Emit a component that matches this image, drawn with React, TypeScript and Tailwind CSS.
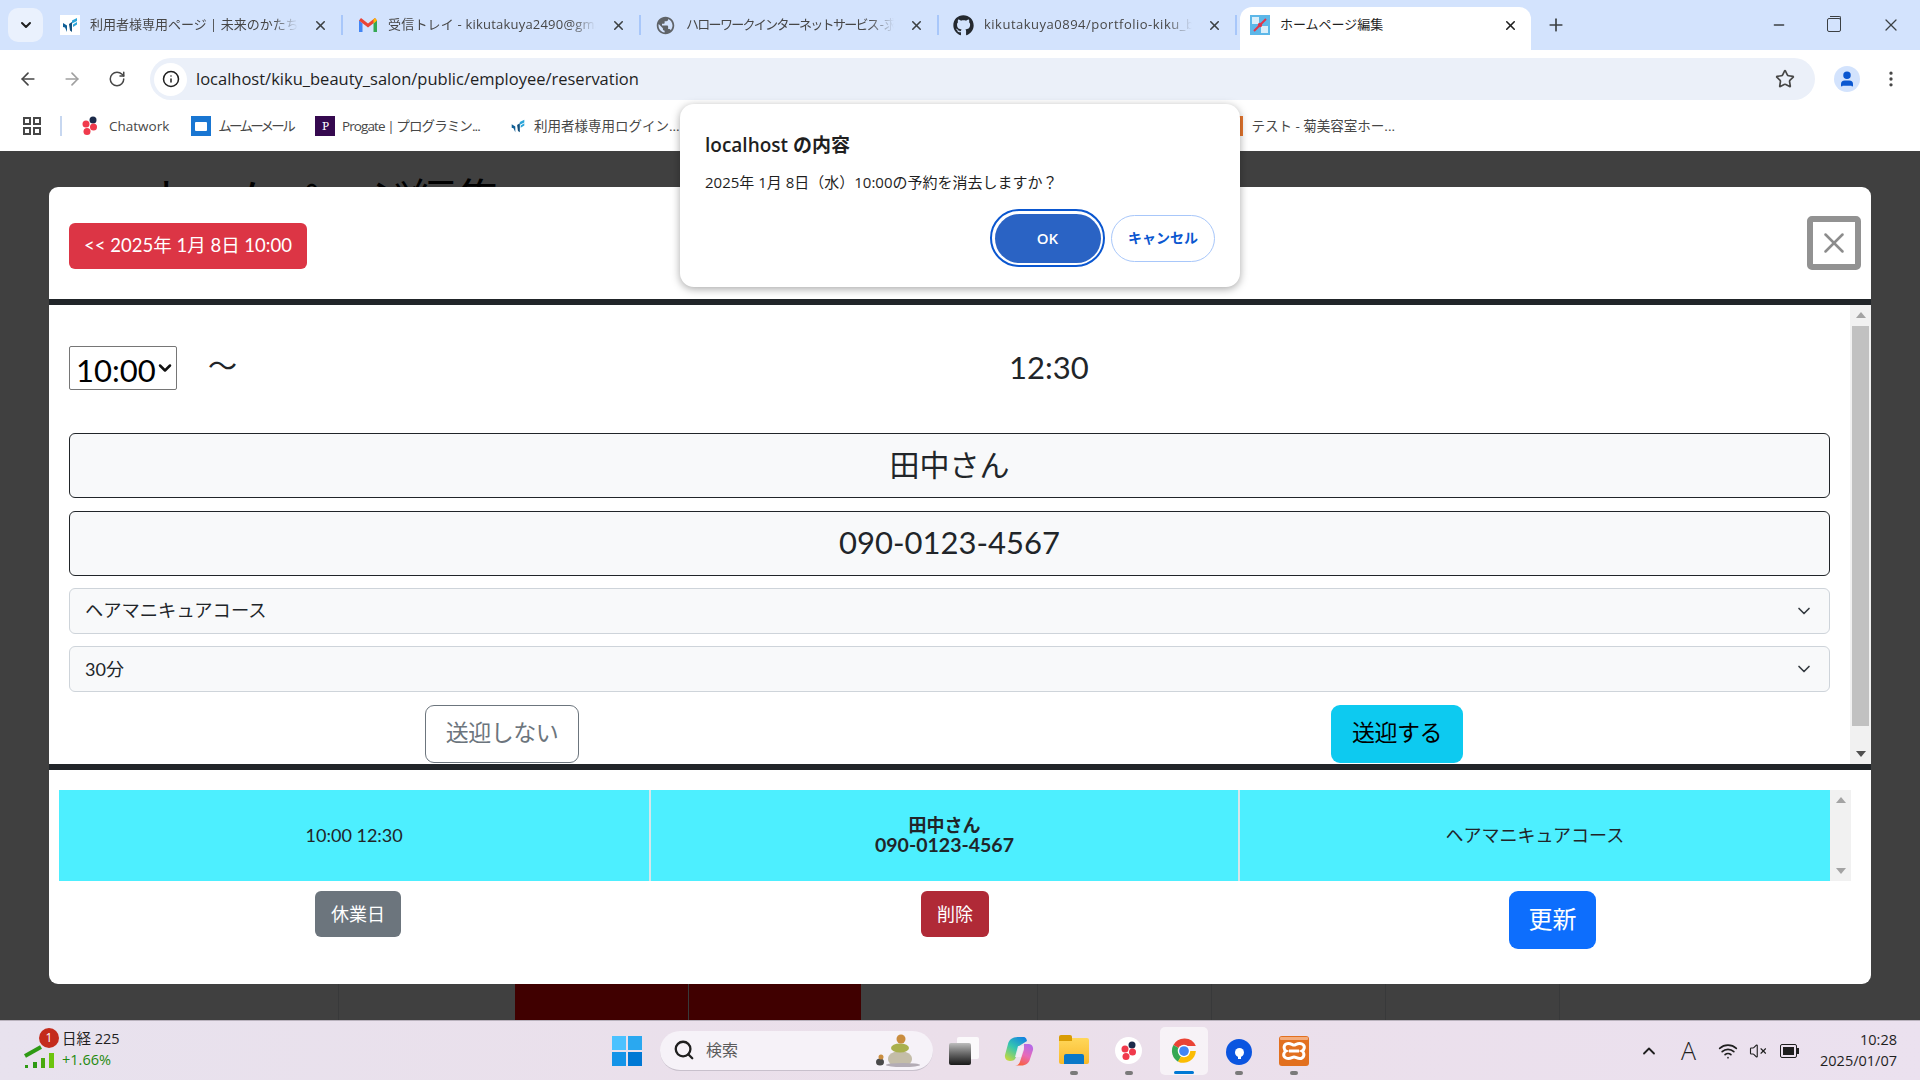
import React, { ReactNode } from 'react';
import { ArrowLeft, ArrowRight, ChevronDown, ChevronUp, Info, Minus, MoreVertical, Plus, RotateCw, Search, Star, User, VolumeX, Wifi, X } from 'lucide-react';
import { FaGithub } from 'react-icons/fa';
import { MdPublic } from 'react-icons/md';

const uiFont = "font-['Open_Sans','Noto_Sans_CJK_JP',sans-serif]";
const pageFont = "font-['Lato','Noto_Sans_CJK_JP',sans-serif]";

const MiraiIcon = ({ size = 20 }: { size?: number }) => (
  <svg width={size} height={size} viewBox="0 0 20 20">
    <rect width="20" height="20" fill="#fff" />
    <path d="M3 8l4 2.500V17L5 12.500 3 12z" fill="#0f5f96" />
    <path d="M9 9l3-2v10l-2-1.500z" fill="#124f7c" />
    <path d="M12 5.500L17 3v3l-5 2.500z" fill="#2aa4d8" />
    <path d="M13 9.500l4-2.500v2.500l-4 2.500z" fill="#2aa4d8" />
  </svg>
);

const GmailIcon = () => (
  <svg width="20" height="20" viewBox="0 0 20 20">
    <path d="M1 5v12h3.500V8.500z" fill="#4285f4" />
    <path d="M19 5v12h-3.500V8.500z" fill="#34a853" />
    <path d="M1 5.500L3 3l7 5.500L17 3l2 2.500-9 7z" fill="#ea4335" />
    <path d="M15.500 4.200L17 3l2 2.500-3.500 3z" fill="#fbbc04" />
  </svg>
);

const SiteIcon = () => (
  <svg width="20" height="20" viewBox="0 0 20 20">
    <rect width="20" height="20" fill="#5db7e8" />
    <rect x="2" y="2" width="7" height="7" fill="#d9eefa" />
    <rect x="11" y="11" width="7" height="7" fill="#d9eefa" />
    <path d="M4 16L16 4" stroke="#e0364a" strokeWidth="2" />
    <circle cx="10" cy="10" r="2.200" fill="#e0364a" />
  </svg>
);

const ChatworkIcon = ({ size = 20 }: { size?: number }) => (
  <svg width={size} height={size} viewBox="0 0 20 20">
    <circle cx="13" cy="4" r="3.500" fill="#1b2a4a" />
    <circle cx="6" cy="8" r="3.500" fill="#f03a4c" />
    <circle cx="13.500" cy="11" r="3.500" fill="#f03a4c" />
    <circle cx="7" cy="15.500" r="3.500" fill="#f03a4c" />
  </svg>
);

const ChromeIcon = () => (
  <svg width="30" height="30" viewBox="0 0 48 48">
    <path d="M24 24L7 14.500A20 20 0 0 1 43 16H24z" fill="#ea4335" />
    <path d="M24 24l-9.500 17A20 20 0 0 1 7 14.500z" fill="#34a853" />
    <path d="M24 24h19a20 20 0 0 1-28.500 17z" fill="#fbbc04" />
    <circle cx="24" cy="24" r="10" fill="#fff" />
    <circle cx="24" cy="24" r="7.800" fill="#4285f4" />
  </svg>
);

const CopilotIcon = () => (
  <svg width="30" height="30" viewBox="0 0 30 30">
    <defs>
      <linearGradient id="copilotLeft" x1="0.800" y1="0" x2="0.200" y2="1">
        <stop offset="0" stopColor="#1384e0" /><stop offset="0.5" stopColor="#36c6b0" /><stop offset="1" stopColor="#c3d840" />
      </linearGradient>
      <linearGradient id="copilotRight" x1="0.700" y1="0" x2="0.300" y2="1">
        <stop offset="0" stopColor="#b46ae8" /><stop offset="0.5" stopColor="#e86ab8" /><stop offset="1" stopColor="#f9603a" />
      </linearGradient>
    </defs>
    <path d="M14 1h5c3 0 3.500 2 4 4l-8 5-3 11c-1 3-3 4-6 4-4 0-5.500-3-5-6L4 8c1-4 4-7 10-7z" fill="url(#copilotLeft)" />
    <path d="M20 8l5 0c3 0 4.500 3 4 6l-3 9c-1 4-4 6.500-9 6.500h-6c3 0 4.500-2 5-4l4-12z" fill="url(#copilotRight)" />
    <path d="M14 10h6l-3 11h-6z" fill="#f4ecf6" opacity="0.900" />
  </svg>
);

const XamppIcon = () => (
  <svg width="30" height="30" viewBox="0 0 30 30">
    <rect width="30" height="30" rx="3" fill="#e2701f" />
    <rect x="1" y="1" width="28" height="3" rx="1" fill="#f4ad7c" />
    <path d="M7 8c4-2 6 1 8 1s4-3 8-1 2 6 0 7c2 1 3 5 0 7s-6-1-8-1-4 3-8 1-2-6 0-7c-2-1-3-5 0-7z" fill="none" stroke="#fff" strokeWidth="3" />
    <path d="M10 15h10" stroke="#fff" strokeWidth="3" />
  </svg>
);

const tabs: { title: string; icon: ReactNode; tracking: string }[] = [
  { title: '利用者様専用ページ | 未来のかたち', icon: <MiraiIcon />, tracking: 'tracking-[0px]' },
  { title: '受信トレイ - kikutakuya2490@gmail.com', icon: <GmailIcon />, tracking: 'tracking-[0.200px]' },
  { title: 'ハローワークインターネットサービス - 求人', icon: <MdPublic size={23} color="#5f6368" />, tracking: 'tracking-[-1.700px]' },
  { title: 'kikutakuya0894/portfolio-kiku_beauty_salon', icon: <FaGithub size={21} color="#24292f" />, tracking: 'tracking-[0.500px]' },
];

function TabStrip() {
  return (
    <div className="h-[50px] bg-[#d3e3fd] flex items-start shrink-0">
      <div className="w-[35px] h-[34px] mt-[8px] ml-[8px] mr-[2px] bg-[#eaf1fd] rounded-[10px] flex items-center justify-center">
        <ChevronDown size={16} strokeWidth={3} color="#1f1f1f" />
      </div>
      {tabs.map((tab) => (
        <div key={tab.title} className="w-[298px] h-[50px] pl-[14px] pr-[5px] flex items-center shrink-0 relative">
          <div className="w-[21px] flex justify-center shrink-0">{tab.icon}</div>
          <div className={`ml-[10px] w-[208px] shrink-0 text-[13px] text-[#474747] whitespace-nowrap overflow-hidden [mask-image:linear-gradient(to_right,black_88%,transparent)] ${tab.tracking}`}>{tab.title}</div>
          <X size={15} strokeWidth={2.500} color="#3c4043" className="ml-[15px] shrink-0" />
          <div className="absolute right-0 top-[15px] w-[2px] h-[20px] bg-[#a8c7fa]" />
        </div>
      ))}
      <div className="w-[291px] h-[43px] mt-[7px] ml-[3px] pb-[7px] bg-white rounded-t-[12px] flex items-center pl-[10px] pr-[13px] shrink-0">
        <SiteIcon />
        <span className="ml-[10px] text-[13px] text-[#1f1f1f] flex-1">ホームページ編集</span>
        <X size={15} strokeWidth={2.500} color="#1f1f1f" />
      </div>
      <Plus size={20} color="#3c4043" className="ml-[15px] mt-[15px]" />
      <div className="ml-auto flex items-center h-[50px] pr-[19px] text-[#3c4043]">
        <Minus size={16} />
        <div className="ml-[40px] w-[14px] h-[14px] relative border border-[#3c4043] rounded-[2px]">
          <div className="absolute -top-[3px] left-[2px] w-[11px] h-[11px] border-t border-r border-[#3c4043] rounded-tr-[2px]" />
        </div>
        <X size={20} strokeWidth={1.500} className="ml-[40px]" />
      </div>
    </div>
  );
}

function AddressBar() {
  return (
    <div className="h-[50px] bg-white flex items-center shrink-0 pl-[18px] pr-[17px]">
      <ArrowLeft size={20} color="#474747" className="mt-[8px]" />
      <ArrowRight size={20} color="#a0a0a0" className="ml-[24px] mt-[8px]" />
      <RotateCw size={18} color="#474747" className="ml-[26px] mt-[8px]" />
      <div className="ml-[24px] w-[1665px] h-[42px] mt-[8px] bg-[#ebf0f9] rounded-full flex items-center pl-[4px] pr-[20px]">
        <div className="w-[33px] h-[33px] bg-white rounded-full flex items-center justify-center">
          <Info size={18} color="#1f1f1f" />
        </div>
        <span className="ml-[9px] text-[16.500px] text-[#1f1f1f] flex-1">localhost/kiku_beauty_salon/public/employee/reservation</span>
        <Star size={20} color="#474747" strokeWidth={2} />
      </div>
      <div className="ml-[19px] mt-[8px] w-[26px] h-[26px] rounded-full bg-[#d3e3fd] flex items-center justify-center">
        <User size={18} color="#0b57d0" fill="#0b57d0" />
      </div>
      <MoreVertical size={20} color="#474747" className="ml-[21px] mt-[8px]" />
    </div>
  );
}

function Bookmark({ icon, label, className, gap }: { icon: ReactNode; label: string; className: string; gap: string }) {
  return (
    <div className={`flex items-center text-[13.500px] text-[#474747] whitespace-nowrap ${className}`}>
      {icon}
      <span className={gap}>{label}</span>
    </div>
  );
}

function BookmarkBar() {
  return (
    <div className="h-[51px] bg-white flex items-center shrink-0 pl-[23px] pt-[1px]">
      <svg width="18" height="18" viewBox="0 0 18 18" fill="none" stroke="#474747" strokeWidth="2">
        <rect x="1" y="1" width="6" height="6" /><rect x="11" y="1" width="6" height="6" />
        <rect x="1" y="11" width="6" height="6" /><rect x="11" y="11" width="6" height="6" />
      </svg>
      <div className="ml-[19px] w-[2px] h-[20px] bg-[#c7d7f0]" />
      <Bookmark className="ml-[18px]" gap="ml-[9px]" icon={<ChatworkIcon />} label="Chatwork" />
      <Bookmark
        className="ml-[22px] tracking-[-2.700px]"
        gap="ml-[7px]"
        icon={<div className="w-[20px] h-[20px] bg-[#1976d2] flex items-center justify-center"><div className="w-[12px] h-[9px] bg-white rounded-[1px]" /></div>}
        label="ムームーメール"
      />
      <Bookmark
        className="ml-[22px] tracking-[-0.900px]"
        gap="ml-[7px]"
        icon={<div className="w-[20px] h-[20px] bg-[#35094f] text-white text-[13px] leading-[20px] text-center font-serif">P</div>}
        label="Progate | プログラミン..."
      />
      <Bookmark className="ml-[29px]" gap="ml-[7px]" icon={<MiraiIcon size={18} />} label="利用者様専用ログイン..." />
      <Bookmark
        className="ml-[auto] mr-[525px]"
        gap="ml-[9px]"
        icon={<div className="w-[20px] h-[20px] bg-[#e8772e] text-white text-[8px] leading-[10px] text-center font-bold">KI<br />KU</div>}
        label="テスト - 菊美容室ホー..."
      />
    </div>
  );
}

function ScrollBar({ small, thumb }: { small?: boolean; thumb?: boolean }) {
  return (
    <div className="w-[21px] bg-[#f1f1f1] flex flex-col items-center justify-between shrink-0 py-[7px]">
      <div className="w-0 h-0 border-x-[5px] border-x-transparent border-b-[6px] border-b-[#a3a3a3]" />
      {thumb && <div className="w-[17px] h-[400px] bg-[#c1c1c1] mt-[8px] mb-auto" />}
      <div className={`w-0 h-0 border-x-[5px] border-x-transparent border-t-[6px] ${small ? 'border-t-[#a3a3a3]' : 'border-t-[#505050]'}`} />
    </div>
  );
}

function FormSelect({ label, className }: { label: string; className: string }) {
  return (
    <div className={`h-[46px] bg-[#f8f9fa] border border-[#ced4da] rounded-[6px] flex items-center justify-between pl-[15px] pr-[15px] text-[#212529] ${className}`}>
      {label}
      <ChevronDown size={20} strokeWidth={2} color="#343a40" />
    </div>
  );
}

function ReservationModal() {
  return (
    <div className={`w-full h-full bg-white rounded-[9px] flex flex-col overflow-hidden ${pageFont}`}>
      <div className="h-[112px] flex items-start justify-between pl-[20px] pr-[10px] shrink-0">
        <button className="mt-[36px] w-[238px] h-[46px] bg-[#dc3545] text-white text-[18.500px] rounded-[6px]">{'<< 2025年 1月 8日 10:00'}</button>
        <div className="mt-[29px] w-[54px] h-[54px] border-[6px] border-[#929292] rounded-[5px] flex items-center justify-center">
          <X size={34} strokeWidth={1.800} color="#8c8c8c" />
        </div>
      </div>
      <div className="h-[6px] bg-[#212529] shrink-0" />
      <div className="h-[459px] flex shrink-0">
        <div className="flex-1 pl-[20px] pr-[20px] pt-[41px]">
          <div className="flex items-center h-[44px] text-[#212529]">
            <div className="relative w-[108px] h-[44px] shrink-0 border border-[#767676] rounded-[2px]">
              <select className="block appearance-none w-full h-[38px] text-[31px] text-black pl-[6px]" defaultValue="10:00">
                <option>10:00</option>
              </select>
              <ChevronDown size={20} strokeWidth={3} color="#111" className="absolute right-[1px] top-[11px] pointer-events-none" />
            </div>
            <span className="ml-[31px] pb-[4px] text-[29px]">〜</span>
            <span className="ml-[772px] pb-[2px] text-[31px]">12:30</span>
          </div>
          <input readOnly value="田中さん" className="mt-[43px] block w-full h-[65px] pb-[6px] bg-[#f8f9fa] border border-[#212529] rounded-[6px] text-center text-[30px] text-[#212529]" />
          <input readOnly value="090-0123-4567" className="mt-[13px] block w-full h-[65px] pb-[3px] bg-[#f8f9fa] border border-[#212529] rounded-[6px] text-center text-[31px] text-[#212529]" />
          <FormSelect className="mt-[12px] text-[18.300px]" label="ヘアマニキュアコース" />
          <FormSelect className="mt-[12px] text-[18px]" label="30分" />
          <div className="mt-[13px] flex">
            <button className="ml-[356px] w-[154px] h-[58px] pb-[3px] border border-[#6c757d] rounded-[9px] text-[23px] tracking-[-0.500px] text-[#6c757d]">送迎しない</button>
            <button className="ml-[752px] w-[132px] h-[58px] pb-[3px] bg-[#0dcaf0] rounded-[9px] text-[23px] tracking-[-0.500px] text-black">送迎する</button>
          </div>
        </div>
        <ScrollBar thumb />
      </div>
      <div className="h-[6px] bg-[#212529] shrink-0" />
      <div className="flex-1 pl-[10px] pt-[20px]">
        <div className="flex h-[91px] w-[1792px]">
          <div className="flex-1 grid grid-cols-3 bg-[#4defff] text-[18px] text-[#212529]">
            <div className="flex items-center justify-center pb-[1px]">10:00 12:30</div>
            <div className="flex flex-col items-center justify-center pb-[2px] leading-[20px] font-bold border-x-2 border-[#d6e6ea]">
              <span>田中さん</span>
              <span className="text-[19.500px]">090-0123-4567</span>
            </div>
            <div className="flex items-center justify-center pb-[1px]">ヘアマニキュアコース</div>
          </div>
          <ScrollBar small />
        </div>
        <div className="mt-[10px] flex items-start">
          <button className="ml-[256px] w-[86px] h-[46px] bg-[#6c757d] text-white text-[18px] rounded-[6px]">休業日</button>
          <button className="ml-[520px] w-[68px] h-[46px] bg-[#b02a37] text-white text-[18px] rounded-[6px]">削除</button>
          <button className="ml-[520px] w-[87px] h-[58px] pb-[2px] bg-[#0d6efd] text-white text-[24px] rounded-[9px]">更新</button>
        </div>
      </div>
    </div>
  );
}

function ConfirmDialog() {
  return (
    <div className={`absolute left-[680px] top-[104px] w-[560px] h-[183px] bg-white rounded-[14px] shadow-[0_2px_8px_rgba(0,0,0,0.35)] pl-[25px] pr-[25px] pt-[26px] ${uiFont}`}>
      <div className="text-[19px] leading-[30px] font-semibold text-[#1f1f1f]">localhost の内容</div>
      <div className="mt-[10px] text-[15px] leading-[24px] text-[#1f1f1f]">2025年 1月 8日（水）10:00の予約を消去しますか？</div>
      <div className="absolute right-[25px] top-[105px] flex items-center gap-[6px]">
        <div className="w-[115px] h-[58px] rounded-full border-[2.500px] border-[#0b57d0] p-[2.500px]">
          <div className="w-full h-full rounded-full bg-[#2a63c4] text-white text-[15px] font-semibold flex items-center justify-center">OK</div>
        </div>
        <div className="w-[104px] h-[47px] pb-[1px] rounded-full border border-[#a8c7fa] text-[#0b57d0] text-[14px] font-semibold flex items-center justify-center">キャンセル</div>
      </div>
    </div>
  );
}

function TaskIcon({ children, className, dot }: { children: ReactNode; className: string; dot?: boolean }) {
  return (
    <div className={`relative h-[59px] flex items-center justify-center shrink-0 ${className}`}>
      {children}
      {dot && <div className="absolute bottom-[5px] left-1/2 -translate-x-1/2 w-[8px] h-[4px] rounded-full bg-[#7a7a7a]" />}
    </div>
  );
}

function Taskbar() {
  return (
    <div className={`h-[60px] shrink-0 border-t border-[#b9b2bd] bg-gradient-to-r from-[#e8e2ee] via-[#ebdfea] to-[#ebe1ef] flex items-center relative ${uiFont}`}>
      <div className="ml-[24px] w-[32px] h-[36px] relative shrink-0">
        <svg width="32" height="36" viewBox="0 0 32 36" className="absolute left-0 top-0">
          <path d="M1 23l16-9" stroke="#2e9a14" strokeWidth="4" fill="none" />
          <rect x="1" y="32" width="3" height="3" fill="#2e9a14" /><rect x="9" y="29" width="4" height="6" fill="#2e9a14" />
          <rect x="17" y="25" width="4" height="10" fill="#49a90f" /><rect x="25" y="20" width="5" height="15" fill="#6cc40f" />
        </svg>
        <div className="absolute left-[15px] -top-[5px] w-[20px] h-[20px] rounded-full bg-[#c42b1c] text-white text-[12px] leading-[20px] text-center">1</div>
      </div>
      <div className="ml-[6px] w-[60px] shrink-0 text-[14.500px] leading-[21px] pb-[4px]">
        <div className="text-[#1f1f1f] whitespace-nowrap">日経 225</div>
        <div className="text-[#1f8a0e]">+1.66%</div>
      </div>
      <div className="ml-[490px] w-[30px] h-[30px] grid grid-cols-2 gap-[2px] shrink-0">
        <div className="bg-[#4cc2ff]" /><div className="bg-[#2aa8f0]" /><div className="bg-[#1494e8]" /><div className="bg-[#0078d4]" />
      </div>
      <div className="ml-[18px] w-[273px] h-[40px] bg-[#f6f2f8] rounded-full border-b border-[#c8c0cc] flex items-center pl-[13px] shrink-0">
        <Search size={22} strokeWidth={2.500} color="#1f1f1f" />
        <span className="ml-[11px] text-[16px] text-[#5c5c5c] flex-1">検索</span>
        <svg width="48" height="36" viewBox="0 0 48 36" className="mr-[12px]">
          <ellipse cx="27" cy="27" rx="12" ry="8" fill="#c4bda8" />
          <ellipse cx="30" cy="33" rx="17" ry="2" fill="#b3acb5" />
          <ellipse cx="27" cy="16" rx="9" ry="4.500" fill="#a9b04e" />
          <circle cx="28" cy="7" r="4.500" fill="#c98d3f" />
          <ellipse cx="7" cy="30" rx="4" ry="3.500" fill="#4a4a4a" />
          <ellipse cx="8" cy="25" rx="2.500" ry="2.500" fill="#c98d3f" />
        </svg>
      </div>
      <div className="ml-[16px] w-[30px] h-[28px] relative shrink-0">
        <div className="absolute right-0 top-0 w-[22px] h-[22px] bg-white/80 rounded-[2px]" />
        <div className="absolute left-0 bottom-0 w-[22px] h-[22px] bg-gradient-to-b from-[#bdbdbd] to-[#1a1a1a] rounded-[2px]" />
      </div>
      <TaskIcon className="ml-[25px] w-[30px]"><CopilotIcon /></TaskIcon>
      <TaskIcon className="ml-[25px] w-[30px]" dot>
        <div className="w-[30px] h-[26px] relative rounded-[2px] bg-gradient-to-b from-[#ffd75a] to-[#f9b925]">
          <div className="absolute -top-[3px] left-0 w-[13px] h-[6px] bg-[#d99c05] rounded-t-[2px]" />
          <div className="absolute bottom-0 left-[5px] w-[20px] h-[10px] bg-[#0a78c8] rounded-t-[2px]" />
        </div>
      </TaskIcon>
      <TaskIcon className="ml-[26px] w-[27px]" dot>
        <div className="w-[27px] h-[27px] rounded-full bg-white flex items-center justify-center">
          <ChatworkIcon size={20} />
        </div>
      </TaskIcon>
      <div className="ml-[18px] w-[48px] h-[48px] bg-white/60 rounded-[5px] flex items-center justify-center relative shrink-0">
        <ChromeIcon />
        <div className="absolute bottom-[1px] left-[14px] w-[20px] h-[3px] rounded-full bg-[#0078d4]" />
      </div>
      <TaskIcon className="ml-[18px] w-[26px]" dot>
        <div className="w-[26px] h-[26px] mt-[3px] rounded-full bg-[#0b55e0] relative flex items-center justify-center">
          <div className="w-[9px] h-[9px] rounded-full bg-white" />
          <div className="absolute top-[14px] w-[3px] h-[6px] bg-white" />
        </div>
      </TaskIcon>
      <TaskIcon className="ml-[27px] w-[30px]" dot><XamppIcon /></TaskIcon>
      <ChevronUp size={20} strokeWidth={2.200} color="#1f1f1f" className="ml-[330px] shrink-0" />
      <span className="ml-[22px] text-[25px] font-thin leading-none text-[#1f1f1f]">A</span>
      <Wifi size={20} color="#1f1f1f" className="ml-[22px] shrink-0" />
      <VolumeX size={18} strokeWidth={1.500} color="#1f1f1f" className="ml-[11px] shrink-0" />
      <div className="ml-[13px] w-[17px] h-[14px] relative shrink-0 border border-[#1f1f1f] rounded-[2px]">
        <div className="absolute left-[2px] top-[2px] w-[11px] h-[8px] bg-[#1f1f1f]" />
        <div className="absolute -right-[3px] top-[3px] w-[2px] h-[6px] bg-[#1f1f1f]" />
      </div>
      <div className="ml-auto pr-[23px] pb-[2px] text-right text-[14.500px] leading-[21px] text-[#1f1f1f]">
        <div>10:28</div>
        <div>2025/01/07</div>
      </div>
    </div>
  );
}

export default function App() {
  return (
    <div className={`w-[1920px] h-[1080px] flex flex-col overflow-hidden relative ${uiFont}`}>
      <TabStrip />
      <AddressBar />
      <BookmarkBar />
      <div className="flex-1 relative bg-white overflow-hidden">
        <div className="h-full flex flex-col justify-between">
          <h1 className="pl-[143px] pt-[15px] text-[45px] text-black">ホームページ編集</h1>
          <div className="ml-[338px] h-[60px] grid grid-cols-[177px_173px_173px_176px_174px_174px_175px]">
            <div className="border-l border-[#dee2e6]" />
            <div className="bg-[#ff0000]" />
            <div className="bg-[#ff0000] border-l border-[#dee2e6]" />
            <div />
            <div className="border-l border-[#dee2e6]" />
            <div className="border-l border-[#dee2e6]" />
            <div className="border-x border-[#dee2e6]" />
          </div>
        </div>
        <div className="absolute inset-0 bg-black/75 px-[49px] py-[36px]">
          <ReservationModal />
        </div>
      </div>
      <Taskbar />
      <ConfirmDialog />
    </div>
  );
}
